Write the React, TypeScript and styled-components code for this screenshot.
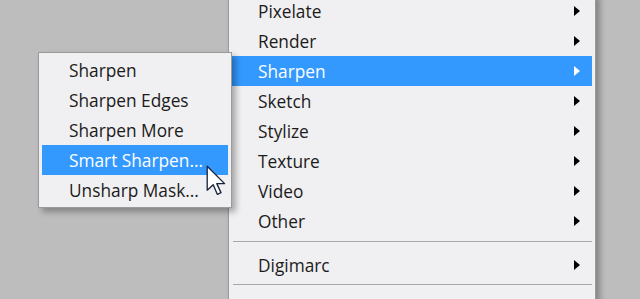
import React from 'react';
import styled, { createGlobalStyle } from 'styled-components';

const GlobalStyle = createGlobalStyle`
  html, body {
    margin: 0;
    padding: 0;
    background: #bdbdbd;
    overflow: hidden;
  }
  * {
    box-sizing: border-box;
  }
`;

const Desktop = styled.div`
  position: relative;
  width: 640px;
  height: 299px;
  background: #bdbdbd;
  font-family: 'Open Sans', 'Noto Sans', sans-serif;
  overflow: hidden;
`;

const Menu = styled.div<{ $left: number; $top: number; $width: number }>`
  position: absolute;
  left: ${(p) => p.$left}px;
  top: ${(p) => p.$top}px;
  width: ${(p) => p.$width}px;
  background: #f0eff1;
  border: 1px solid #9a9a9a;
  padding: 2px 3px;
  display: flex;
  flex-direction: column;
  box-shadow: 4px 4px 6px rgba(0, 0, 0, 0.3);
`;

const Item = styled.div<{ $active?: boolean; $indent: number; $tall?: boolean }>`
  height: ${(p) => (p.$tall ? 33 : 30)}px;
  padding: ${(p) => (p.$tall ? 5 : 0)}px 12px 0 ${(p) => p.$indent}px;
  display: flex;
  align-items: center;
  justify-content: space-between;
  font-size: 17.3px;
  font-weight: 500;
  color: ${(p) => (p.$active ? '#ffffff' : '#1b1b1b')};
  background: ${(p) => (p.$active ? '#3399ff' : 'transparent')};
  white-space: nowrap;
`;

const Arrow = styled.span<{ $active?: boolean }>`
  width: 0;
  height: 0;
  border-top: 5px solid transparent;
  border-bottom: 5px solid transparent;
  border-left: 6px solid ${(p) => (p.$active ? '#ffffff' : '#000000')};
`;

const Separator = styled.div`
  height: 10px;
  display: flex;
  align-items: center;
  padding: 0 0 0 1px;
  &::after {
    content: '';
    flex: 1;
    height: 1px;
    background: #a8a8a8;
  }
`;

const Cursor = styled.svg`
  position: absolute;
  left: 206px;
  top: 165px;
`;

const mainItems = ['Pixelate', 'Render', 'Sharpen', 'Sketch', 'Stylize', 'Texture', 'Video', 'Other'];
const subItems = ['Sharpen', 'Sharpen Edges', 'Sharpen More', 'Smart Sharpen...', 'Unsharp Mask...'];

export default function App() {
  return (
    <Desktop>
      <GlobalStyle />
      <Menu $left={228} $top={-7} $width={368}>
        {mainItems.map((name) => (
          <Item key={name} $indent={26} $active={name === 'Sharpen'}>
            {name}
            <Arrow $active={name === 'Sharpen'} />
          </Item>
        ))}
        <Separator />
        <Item $indent={26} $tall>
          Digimarc
          <Arrow />
        </Item>
        <Separator />
        <Item $indent={26} />
      </Menu>
      <Menu $left={38} $top={52} $width={194}>
        {subItems.map((name) => (
          <Item key={name} $indent={27} $active={name === 'Smart Sharpen...'}>
            {name}
          </Item>
        ))}
      </Menu>
      <Cursor width="24" height="36" viewBox="0 0 20 30">
        <path
          d="M1 1 L1 21 L6 16.5 L9.5 24.5 L12.5 23 L9 15.5 L15.5 15.5 Z"
          fill="#ffffff"
          stroke="#17233d"
          strokeWidth="1.1"
          strokeLinejoin="round"
        />
      </Cursor>
    </Desktop>
  );
}
